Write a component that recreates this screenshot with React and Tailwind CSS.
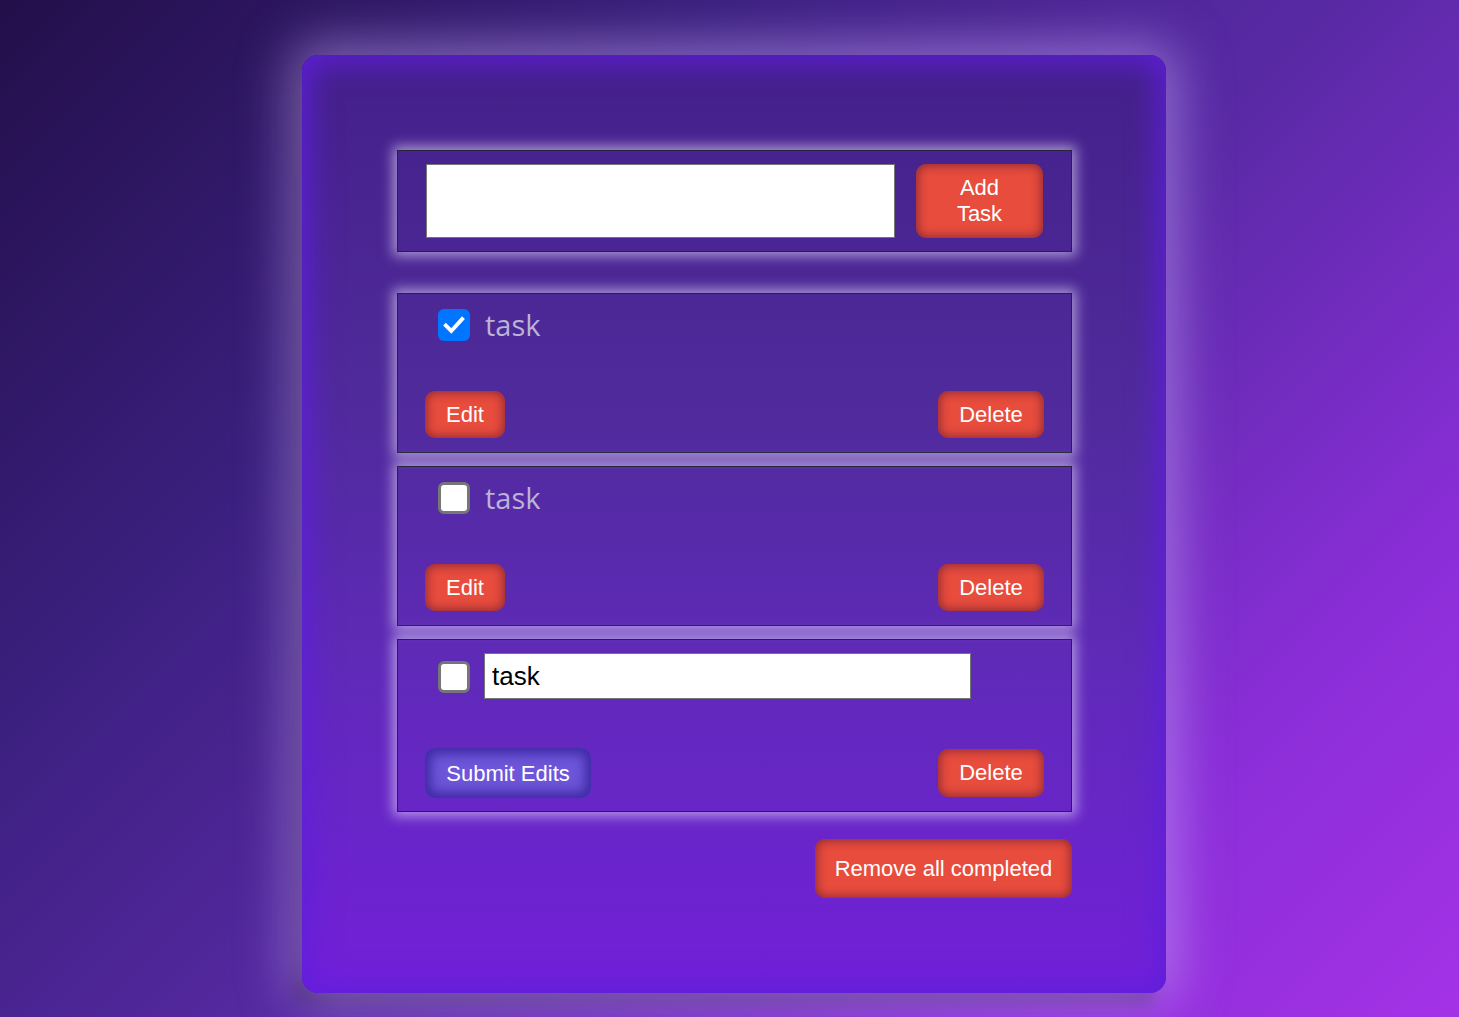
import { useState } from 'react'

const INITIAL = [
  { id: 1, text: 'task', done: true, editing: false },
  { id: 2, text: 'task', done: false, editing: false },
  { id: 3, text: 'task', done: false, editing: true },
]

const redBtn =
  "rounded-[10px] bg-[#e74c3c] font-['Liberation_Sans',Arial,sans-serif] text-[22px] leading-[26px] text-white shadow-[inset_0_0_10px_2px_rgba(90,20,50,0.6)]"

const box =
  'border border-[#26243a] shadow-[0_0_12px_4px_rgba(235,225,255,0.6)]'

function Check({ checked, onChange }) {
  return (
    <button
      type="button"
      onClick={onChange}
      className={`flex h-[32px] w-[32px] shrink-0 items-center justify-center rounded-[6px] ${
        checked ? 'bg-[#0075ff]' : 'border-[3px] border-[#767676] bg-white'
      }`}
    >
      {checked && (
        <svg viewBox="0 0 24 24" className="h-[26px] w-[26px]">
          <path d="M4.5 12.5l5 5L19.5 6.5" fill="none" stroke="white" strokeWidth="3.6" strokeLinecap="square" />
        </svg>
      )}
    </button>
  )
}

function TaskBox({ task, onToggle, onEdit, onSubmit, onDelete, onChange }) {
  if (task.editing) {
    return (
      <div className={`${box} flex h-[173px] flex-col justify-between px-[27px] pb-[13px] pt-[13px]`}>
        <div className="flex items-center">
          <div className="ml-[13px] mr-[14px] mt-[2px]">
            <Check checked={task.done} onChange={onToggle} />
          </div>
          <input
            value={task.text}
            onChange={(e) => onChange(e.target.value)}
            className="h-[46px] w-[487px] border border-[#767676] bg-white px-[7px] font-['Liberation_Sans',Arial,sans-serif] text-[26px] text-black outline-none"
          />
        </div>
        <div className="flex items-end justify-between">
          <button
            type="button"
            onClick={onSubmit}
            className="h-[50px] w-[166px] rounded-[10px] bg-[#6e56da] font-['Liberation_Sans',Arial,sans-serif] text-[22px] text-white shadow-[inset_0_0_12px_6px_rgba(50,30,150,0.8)]"
          >
            Submit Edits
          </button>
          <button type="button" onClick={onDelete} className={`${redBtn} mb-[1px] h-[48px] w-[106px]`}>
            Delete
          </button>
        </div>
      </div>
    )
  }
  return (
    <div className={`${box} flex h-[160px] flex-col justify-between px-[27px] pb-[14px] pt-[15px]`}>
      <div className="flex items-center gap-[15px] pl-[13px]">
        <Check checked={task.done} onChange={onToggle} />
        <span className="font-['Open_Sans',sans-serif] text-[29px] leading-[32px] text-[#bab3d6]">{task.text}</span>
      </div>
      <div className="flex items-end justify-between">
        <button type="button" onClick={onEdit} className={`${redBtn} h-[47px] w-[80px]`}>
          Edit
        </button>
        <button type="button" onClick={onDelete} className={`${redBtn} h-[47px] w-[106px]`}>
          Delete
        </button>
      </div>
    </div>
  )
}

export default function App() {
  const [tasks, setTasks] = useState(INITIAL)
  const [draft, setDraft] = useState('')

  function update(id, patch) {
    setTasks((list) => list.map((t) => (t.id === id ? { ...t, ...patch } : t)))
  }

  function addTask() {
    if (!draft.trim()) return
    setTasks((list) => [...list, { id: Date.now(), text: draft, done: false, editing: false }])
    setDraft('')
  }

  return (
    <div className="min-h-[1017px] w-full bg-[linear-gradient(135deg,#230f4a_0%,#3c2080_30%,#5a2aa6_55%,#8a2ed8_80%,#a432e6_100%)] pt-[55px]">
      <div className="ml-[302px] flex h-[938px] w-[864px] flex-col gap-[13px] rounded-[16px] bg-[linear-gradient(180deg,#43208a_0%,#4f2a9a_35%,#5f2ab8_65%,#7320da_100%)] pl-[95px] pr-[94px] pt-[95px] shadow-[inset_0_0_30px_8px_rgba(95,30,220,0.9),0_0_50px_12px_rgba(205,175,255,0.5),-10px_12px_16px_rgba(30,10,60,0.45)]">
        <div className={`${box} mb-[28px] flex h-[102px] items-center justify-between px-[28px]`}>
          <input
            value={draft}
            onChange={(e) => setDraft(e.target.value)}
            className="h-[74px] w-[469px] border border-[#767676] bg-white px-2 text-[20px] text-black outline-none"
          />
          <button type="button" onClick={addTask} className={`${redBtn} h-[74px] w-[127px] text-[21px]`}>
            Add
            <br />
            Task
          </button>
        </div>

        {tasks.map((t) => (
          <TaskBox
            key={t.id}
            task={t}
            onToggle={() => update(t.id, { done: !t.done })}
            onEdit={() => update(t.id, { editing: true })}
            onSubmit={() => update(t.id, { editing: false })}
            onChange={(text) => update(t.id, { text })}
            onDelete={() => setTasks((list) => list.filter((x) => x.id !== t.id))}
          />
        ))}

        <div className="mt-[14px] flex justify-end">
          <button
            type="button"
            onClick={() => setTasks((list) => list.filter((x) => !x.done))}
            className={`${redBtn} h-[59px] w-[257px] text-[21.5px]`}
          >
            Remove all completed
          </button>
        </div>
      </div>
    </div>
  )
}
